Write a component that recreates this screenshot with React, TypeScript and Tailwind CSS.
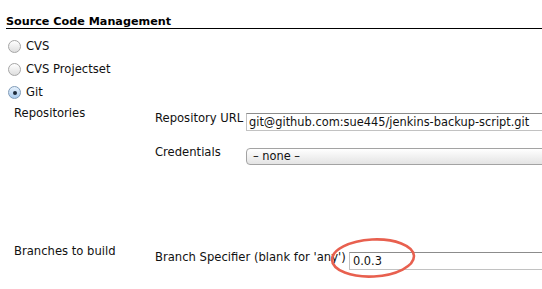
import React from "react";

const fontStack = {
  fontFamily: '"DejaVu Sans", Verdana, sans-serif',
};

function Radio({ checked, label }: { checked?: boolean; label: string }) {
  return (
    <div className="flex h-[23px] items-center">
      <span
        className={
          checked
            ? "ml-[8px] flex h-[13px] w-[13px] items-center justify-center rounded-full border border-[#7f9bb8] bg-gradient-to-b from-[#e6f1fc] to-[#a9cbee]"
            : "ml-[8px] h-[13px] w-[13px] rounded-full border border-[#a6a6a6] bg-gradient-to-b from-[#ffffff] to-[#dedede]"
        }
      >
        {checked && <span className="h-[4px] w-[4px] rounded-full bg-[#1d2a3a]" />}
      </span>
      <span className="ml-[5px] text-[11.6px] leading-[13px] text-[#111]">{label}</span>
    </div>
  );
}

export default function App() {
  return (
    <div
      className="relative h-[289px] w-[542px] overflow-hidden bg-white text-[#111]"
      style={fontStack}
    >
      {/* titulo */}
      <div className="ml-[6px] h-[29px] border-b border-black pt-[15px] text-[11.2px] font-bold leading-[14px] text-black">
        Source Code Management
      </div>

      <div className="mt-[6px]">
        <Radio label="CVS" />
        <Radio label="CVS Projectset" />
        <Radio checked label="Git" />
      </div>

      {/* Repositories */}
      <div className="mt-[3px] flex text-[11.6px] leading-[13px]">
        <div className="w-[155px] shrink-0 pl-[14px]">Repositories</div>
        <div className="flex flex-col pt-[6px]">
          <div className="flex items-start">
            <div className="-mt-[1px] w-[91px] shrink-0 whitespace-nowrap">Repository URL</div>
            <div className="flex h-[18px] w-[400px] items-center border border-[#c2c2c2] border-t-[#8c8c8c] pl-[2px] text-[11.4px]">
              git@github.com:sue445/jenkins-backup-script.git
            </div>
          </div>
          <div className="mt-[17px] flex items-start">
            <div className="-mt-[2px] w-[91px] shrink-0">Credentials</div>
            <div className="flex h-[17px] w-[400px] items-center rounded-[4px] border border-[#a3a3a3] bg-gradient-to-b from-[#ffffff] to-[#e4e4e4] pl-[6px] text-[11.4px]">
              – none –
            </div>
          </div>
        </div>
      </div>

      {/* Branches */}
      <div className="mt-[80px] flex text-[11.6px] leading-[13px]">
        <div className="w-[155px] shrink-0 pl-[14px]">Branches to build</div>
        <div className="flex pt-[7px]">
          <div className="-mt-[1px] w-[194px] shrink-0 whitespace-nowrap">
            Branch Specifier (blank for 'any')
          </div>
          <div className="flex h-[18px] w-[300px] items-center border border-[#c2c2c2] border-t-[#8c8c8c] pl-[3px] text-[11.4px]">
            0.0.3
          </div>
        </div>
      </div>

      {/* circulo rojo */}
      <svg
        className="pointer-events-none absolute left-[326px] top-[233px]"
        width="96"
        height="50"
        viewBox="0 0 96 50"
      >
        <ellipse
          cx="47"
          cy="25"
          rx="41"
          ry="18.5"
          fill="none"
          stroke="#e8604f"
          strokeWidth="2.6"
          transform="rotate(-3 47 25)"
        />
      </svg>
    </div>
  );
}
